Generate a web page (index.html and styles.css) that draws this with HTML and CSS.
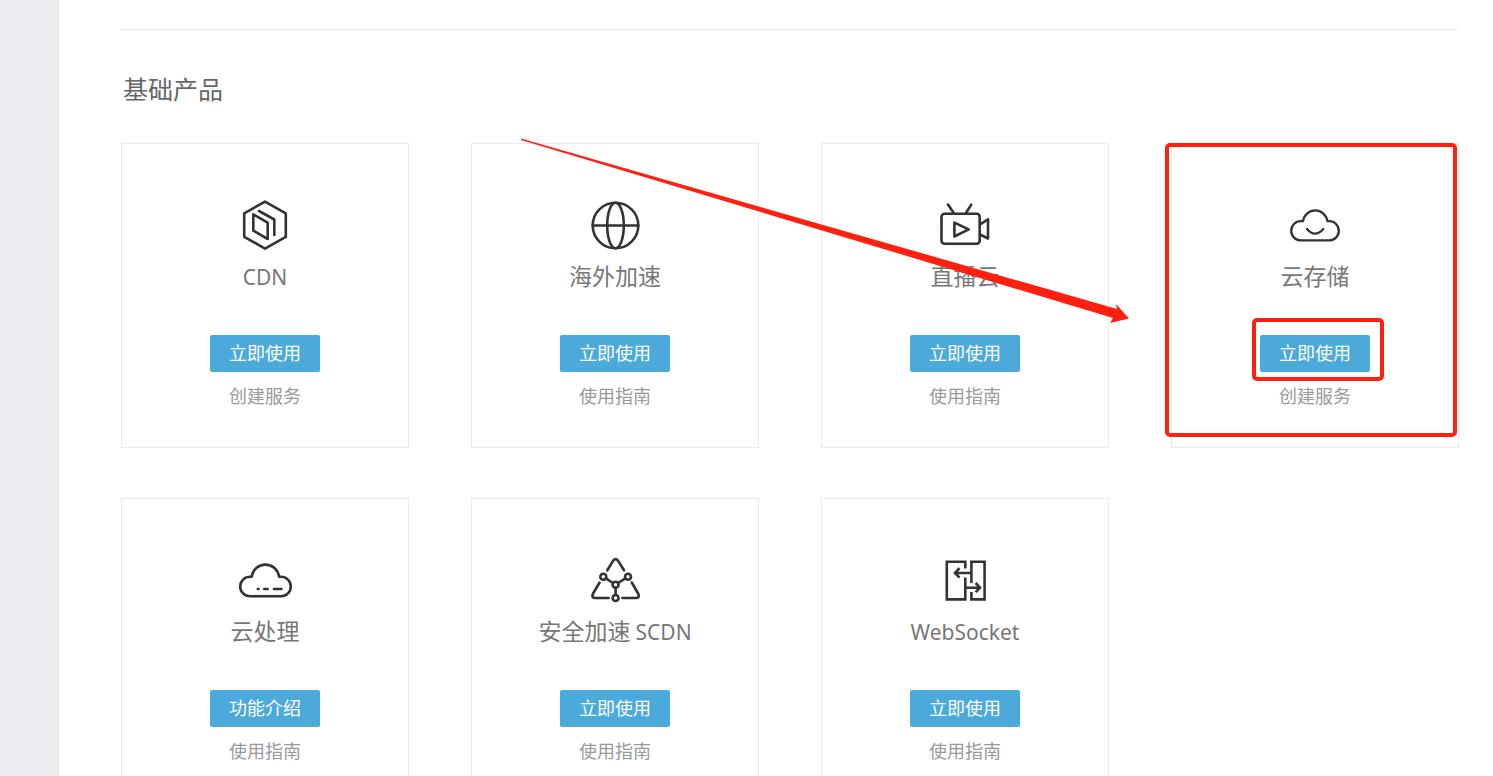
FILE: index.html
```html
<!DOCTYPE html>
<html lang="zh-CN">
<head>
    <meta charset="UTF-8">
    <meta name="viewport" content="width=device-width, initial-scale=1.0">
    <title>基础产品</title>
    <link rel="stylesheet" href="styles.css">
</head>
<body>
    <div class="layout">
        <aside class="sidebar"></aside>

        <main class="content">
            <hr class="divider">
            <h2 class="section-title">基础产品</h2>

            <div class="product-grid">
                <section class="product">
                    <svg class="icon" viewBox="0 0 56 56">
                        <path d="M28 4.6 L48.8 16.4 V39.8 L28 51.6 L7.2 39.8 V16.4 Z"/>
                        <path d="M16.3 17.3 L30.7 25.7 V42 L16.3 33.7 Z"/>
                        <path d="M22 14 L37.3 22.5 V38"/>
                    </svg>
                    <h3><span class="latin">CDN</span></h3>
                    <button type="button">立即使用</button>
                    <a href="#">创建服务</a>
                </section>

                <section class="product">
                    <svg class="icon" viewBox="0 0 56 56">
                        <circle cx="28.5" cy="28.5" r="22.8"/>
                        <ellipse cx="28.5" cy="28.5" rx="8.3" ry="22.8"/>
                        <path d="M5.7 28.5 H51.3"/>
                    </svg>
                    <h3>海外加速</h3>
                    <button type="button">立即使用</button>
                    <a href="#">使用指南</a>
                </section>

                <section class="product">
                    <svg class="icon" viewBox="0 0 56 56">
                        <rect x="4.5" y="16.7" width="38.2" height="30" rx="3"/>
                        <path d="M11 7.6 L16.7 16 M34.3 7.6 L29 16"/>
                        <path d="M18 25.6 L32.3 32.4 L18 39.5 Z" transform="translate(-0.6 0)"/>
                        <path d="M43 27.3 L51 22.3 V41.5 L43 37.5"/>
                    </svg>
                    <h3>直播云</h3>
                    <button type="button">立即使用</button>
                    <a href="#">使用指南</a>
                </section>

                <section class="product marked">
                    <svg class="icon thin" viewBox="0 0 56 56">
                        <path d="M16 24.2 A12.3 12.3 0 0 1 40.4 24.2 H42.2 A9.6 9.6 0 0 1 42.2 43.4 H13.8 A9.6 9.6 0 0 1 13.8 24.2 Z"/>
                        <path d="M20 32 Q28 41.4 36.3 32"/>
                    </svg>
                    <h3>云存储</h3>
                    <div class="marked-action">
                        <button type="button">立即使用</button>
                    </div>
                    <a href="#">创建服务</a>
                </section>

                <section class="product">
                    <svg class="icon" viewBox="0 0 56 56">
                        <path d="M14.8 24.7 A13.7 13.7 0 0 1 42 24.7 H44 A9.8 9.8 0 0 1 44 44.3 H13 A9.8 9.8 0 0 1 13 24.7 Z"/>
                        <path d="M20.8 37 H21.6 M27.2 37 H30.6 M37 37 H44.4"/>
                    </svg>
                    <h3>云处理</h3>
                    <button type="button">功能介绍</button>
                    <a href="#">使用指南</a>
                </section>

                <section class="product">
                    <svg class="icon" viewBox="0 0 56 56">
                        <path d="M20.3 18.3 L26.2 8.6 Q28.6 5.6 31 8.6 L37 18.3"/>
                        <path d="M12.6 30.5 L5.8 42 Q4.4 46 8.3 46 H21.7"/>
                        <path d="M44.8 30.5 L51.4 42 Q52.8 46 49 46 H35.4"/>
                        <circle cx="16.3" cy="24.7" r="3"/>
                        <circle cx="41" cy="24.7" r="3"/>
                        <circle cx="28.6" cy="32.7" r="3"/>
                        <circle cx="28.6" cy="46" r="3"/>
                        <path d="M18.9 26.4 L26 31 M38.4 26.4 L31.2 31 M28.6 35.8 V43"/>
                    </svg>
                    <h3>安全加速 <span class="latin">SCDN</span></h3>
                    <button type="button">立即使用</button>
                    <a href="#">使用指南</a>
                </section>

                <section class="product">
                    <svg class="icon square" viewBox="0 0 56 56">
                        <path d="M28.3 16.5 V9.8 H9.8 V47.4 H28.3 V25.5"/>
                        <path d="M34.4 31 V9.8 H47.6 V47.4 H34.4 V40"/>
                        <path d="M34.4 21 H18 M22.5 16.2 L18 21 L22.5 25.6"/>
                        <path d="M28.3 35.7 H43 M38.6 31 L43 35.7 L38.6 40.2"/>
                    </svg>
                    <h3><span class="latin">WebSocket</span></h3>
                    <button type="button">立即使用</button>
                    <a href="#">使用指南</a>
                </section>

                <svg class="arrow" viewBox="0 0 612 188">
                    <path d="M1 0.5 L597 171 L596 166 L609 180.5 L590 185 L593 180 L1 2 Z"/>
                </svg>
            </div>
        </main>
    </div>
</body>
</html>
```

FILE: styles.css
```css
* {
    box-sizing: border-box;
}

body {
    margin: 0;
    font-family: "Noto Sans CJK SC", "Noto Sans", sans-serif;
    background: #fff;
}

.layout {
    display: flex;
    height: 100vh;
    overflow: hidden;
}

.sidebar {
    flex: 0 0 59px;
    background: #ebecf0;
    border-right: 2px solid #e8e9ed;
}

.content {
    flex: 1;
    padding: 29px 34px 0 62px;
}

.divider {
    margin: 0;
    border: 0;
    border-top: 1px solid #ebebeb;
}

.section-title {
    margin: 38px 0 35px;
    padding-left: 2px;
    font-size: 25px;
    font-weight: 400;
    line-height: 40px;
    color: #666;
}

.product-grid {
    position: relative;
    display: grid;
    grid-template-columns: repeat(4, 1fr);
    gap: 50px 62px;
}

.product {
    position: relative;
    display: flex;
    flex-direction: column;
    align-items: center;
    padding: 53px 0 40px;
    border: 1px solid #ebebeb;
}

.icon {
    width: 56px;
    height: 56px;
    fill: none;
    stroke: #333;
    stroke-width: 2.6;
    stroke-linecap: round;
    stroke-linejoin: round;
}

.icon.thin {
    stroke-width: 2.3;
}

.icon.square {
    stroke-linecap: butt;
    stroke-linejoin: miter;
}

.product h3 {
    margin: 6px 0 44px;
    font-size: 23px;
    font-weight: 400;
    line-height: 32px;
    color: #777;
}

.product .latin {
    font-family: "Noto Sans", sans-serif;
    font-size: 21px;
    line-height: 1;
}

.product button {
    display: block;
    width: 110px;
    height: 37px;
    padding: 0 0 4px;
    border: 0;
    border-radius: 2px;
    background: #4caadb;
    color: #fff;
    font-family: inherit;
    font-size: 18px;
    cursor: pointer;
}

.product a {
    margin-top: 11px;
    font-size: 18px;
    font-weight: 400;
    line-height: 24px;
    color: #999;
    text-decoration: none;
}

/* red highlight marks */
.marked::before,
.marked-action::before {
    content: "";
    position: absolute;
    border: 4px solid #ff2010;
    border-radius: 5px;
    pointer-events: none;
}

.marked::before {
    inset: -1px 1px 10px -7px;
}

.marked-action {
    position: relative;
}

.marked-action::before {
    inset: -17px -14px -9px -8px;
}

.arrow {
    position: absolute;
    top: -5px;
    left: 399px;
    width: 612px;
    height: 188px;
    fill: #ff2010;
    pointer-events: none;
}
```
